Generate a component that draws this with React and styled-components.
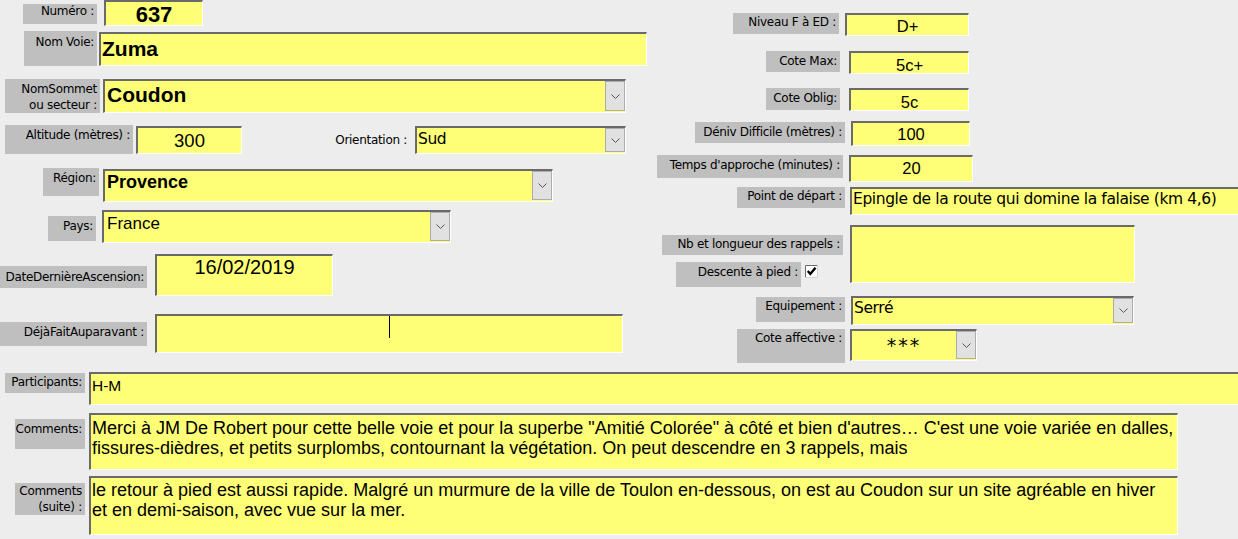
import React from 'react';
import styled, { createGlobalStyle } from 'styled-components';

const Global = createGlobalStyle`
  html, body { margin: 0; padding: 0; background: #ededed; }
  body { width: 1238px; height: 539px; overflow: hidden; }
`;

const Form = styled.div`
  width: 1238px;
  height: 539px;
  overflow: hidden;
  background: #ededed;
  display: flex;
  flex-direction: column;
`;

const TopSection = styled.div`
  display: flex;
  height: 362px;
  flex: none;
`;

const Column = styled.div`
  display: flex;
  flex-direction: column;
  width: ${p => p.$w}px;
  flex: none;
`;

const Row = styled.div`
  display: flex;
  align-items: flex-start;
  flex: none;
  margin-top: ${p => p.$mt || 0}px;
`;

const Label = styled.div`
  box-sizing: border-box;
  flex: none;
  width: ${p => p.$w}px;
  height: ${p => p.$h}px;
  margin-left: ${p => p.$x || 0}px;
  margin-top: ${p => p.$y || 0}px;
  padding: ${p => (p.$pt ?? 3)}px 3px 0 0;
  background: ${p => (p.$plain ? 'transparent' : '#bfbfbf')};
  color: #000;
  font-family: "DejaVu Sans", Verdana, sans-serif;
  font-size: 12px;
  letter-spacing: -0.3px;
  line-height: ${p => p.$lh || 15}px;
  text-align: right;
  white-space: pre-line;
`;

const Field = styled.div`
  box-sizing: border-box;
  flex: none;
  display: flex;
  align-items: flex-start;
  width: ${p => p.$w}px;
  height: ${p => p.$h}px;
  margin-left: ${p => p.$x || 0}px;
  margin-top: ${p => p.$y || 0}px;
  background: #ffff77;
  border-top: 2px solid #6a6a6a;
  border-left: 2px solid #6a6a6a;
  border-right: 1px solid #ffffff;
  border-bottom: 1px solid #ffffff;
  overflow: hidden;
`;

const Value = styled.div`
  flex: 1;
  min-width: 0;
  align-self: stretch;
  box-sizing: border-box;
  padding-top: ${p => p.$pt || 0}px;
  padding-left: ${p => p.$pl || 0}px;
  font-family: ${p => (p.$sys ? '"DejaVu Sans", Verdana, sans-serif' : '"Liberation Sans", Arial, sans-serif')};
  font-size: ${p => p.$size}px;
  font-weight: ${p => (p.$bold ? 700 : 400)};
  letter-spacing: ${p => (p.$ls != null ? `${p.$ls}px` : p.$sys ? '-0.4px' : '0')};
  line-height: ${p => (p.$lh ? `${p.$lh}px` : 'normal')};
  text-align: ${p => p.$align || 'left'};
  color: #000;
  white-space: nowrap;
`;

const DropButton = styled.div`
  box-sizing: border-box;
  flex: none;
  width: 20px;
  align-self: stretch;
  margin-bottom: 1px;
  background: #e1e1e1;
  border: 1px solid #acacac;
  display: flex;
  align-items: center;
  justify-content: center;
`;

const LabelStack = styled.div`
  display: flex;
  flex-direction: column;
  width: ${p => p.$w}px;
  flex: none;
`;

const CheckRow = styled.div`
  display: flex;
  align-items: flex-start;
  margin-left: ${p => p.$x || 0}px;
  margin-top: ${p => p.$y || 0}px;
`;

const CheckBox = styled.div`
  flex: none;
  width: 13px;
  height: 13px;
  margin-left: 4px;
  margin-top: 3px;
  display: flex;
`;

const Caret = styled.span`
  display: block;
  width: 1px;
  height: 22px;
  margin-left: ${p => p.$x}px;
  background: #000;
`;

const Chevron = () => (
  <svg width="9" height="5" viewBox="0 0 9 5">
    <polyline points="0.5,0.5 4.5,4.5 8.5,0.5" fill="none" stroke="#555" strokeWidth="1" />
  </svg>
);

const Check = () => (
  <svg width="13" height="13" viewBox="0 0 13 13">
    <rect x="0" y="0" width="13" height="13" fill="#fff" />
    <path d="M0.5 12.5 V0.5 H12.5" fill="none" stroke="#6a6a6a" />
    <path d="M12.5 0.5 V12.5 H0.5" fill="none" stroke="#d4d4d4" />
    <path d="M2.8 6 L5.3 9 L10.5 2.8" fill="none" stroke="#000" strokeWidth="2.4" />
  </svg>
);

export default function App() {
  return (
    <Form>
      <Global />
      <TopSection>
        <Column $w={650}>
          <Row $mt={0}>
            <Label $x={23} $y={4} $w={74} $h={20} $pt={0}>Numéro :</Label>
            <Field $x={7} $w={99} $h={26}>
              <Value $size={22} $bold $align="center">637</Value>
            </Field>
          </Row>
          <Row $mt={5}>
            <Label $x={24} $w={73} $h={35} $pt={4}>Nom Voie:</Label>
            <Field $x={2} $y={1} $w={548} $h={34}>
              <Value $size={21} $bold $pl={1} $pt={3}>Zuma</Value>
            </Field>
          </Row>
          <Row $mt={13}>
            <Label $x={5} $w={95} $h={34} $pt={2} $lh={16}>{'NomSommet\nou secteur :'}</Label>
            <Field $x={3} $w={523} $h={34}>
              <Value $size={21} $bold $pl={2} $pt={2}>Coudon</Value>
              <DropButton><Chevron /></DropButton>
            </Field>
          </Row>
          <Row $mt={12}>
            <Label $x={5} $w={128} $h={29}>Altitude (mètres) :</Label>
            <Field $x={3} $y={1} $w={106} $h={28}>
              <Value $size={18.5} $align="center" $pt={2}>300</Value>
            </Field>
            <Label $plain $x={85} $y={5} $w={83} $h={20}>Orientation :</Label>
            <Field $x={5} $y={1} $w={211} $h={28}>
              <Value $sys $size={15.5} $pl={1} $pt={2}>Sud</Value>
              <DropButton><Chevron /></DropButton>
            </Field>
          </Row>
          <Row $mt={14}>
            <Label $x={43} $w={56} $h={28}>Région:</Label>
            <Field $x={4} $y={1} $w={450} $h={33}>
              <Value $size={18} $bold $pl={2} $pt={1}>Provence</Value>
              <DropButton><Chevron /></DropButton>
            </Field>
          </Row>
          <Row $mt={8}>
            <Label $x={48} $y={6} $w={48} $h={25}>Pays:</Label>
            <Field $x={6} $w={349} $h={33}>
              <Value $size={17} $pl={3} $pt={2}>France</Value>
              <DropButton><Chevron /></DropButton>
            </Field>
          </Row>
          <Row $mt={11}>
            <Label $y={12} $w={147} $h={22} $pt={4}>DateDernièreAscension:</Label>
            <Field $x={8} $w={178} $h={42}>
              <Value $size={20} $align="center" $pt={0}>16/02/2019</Value>
            </Field>
          </Row>
          <Row $mt={18}>
            <Label $y={8} $w={147} $h={24} $pt={3}>DéjàFaitAuparavant :</Label>
            <Field $x={8} $w={468} $h={39}>
              <Caret $x={232} />
            </Field>
          </Row>
        </Column>

        <Column $w={588}>
          <Row $mt={13}>
            <Label $x={83} $w={106} $h={21} $pt={2}>Niveau F à ED :</Label>
            <Field $x={6} $w={124} $h={23}>
              <Value $size={16.5} $align="center" $pt={2}>D+</Value>
            </Field>
          </Row>
          <Row $mt={15}>
            <Label $x={116} $w={74} $h={21}>Cote Max:</Label>
            <Field $x={9} $w={120} $h={23}>
              <Value $size={16.5} $align="center" $pt={3}>5c+</Value>
            </Field>
          </Row>
          <Row $mt={14}>
            <Label $x={116} $w={74} $h={22}>Cote Oblig:</Label>
            <Field $x={9} $w={120} $h={23}>
              <Value $size={16.5} $align="center" $pt={3}>5c</Value>
            </Field>
          </Row>
          <Row $mt={10}>
            <Label $x={45} $y={1} $w={150} $h={21}>Déniv Difficile (mètres) :</Label>
            <Field $x={6} $w={119} $h={25}>
              <Value $size={16.5} $align="center" $pt={2}>100</Value>
            </Field>
          </Row>
          <Row $mt={9}>
            <Label $x={7} $w={186} $h={23}>Temps d'approche (minutes) :</Label>
            <Field $x={6} $w={124} $h={27}>
              <Value $size={16.5} $align="center" $pt={2}>20</Value>
            </Field>
          </Row>
          <Row $mt={5}>
            <Label $x={87} $w={108} $h={21} $pt={2}>Point de départ :</Label>
            <Field $x={5} $w={400} $h={28}>
              <Value $sys $size={15.5} $pl={1} $pt={1}>Epingle de la route qui domine la falaise (km 4,6)</Value>
            </Field>
          </Row>
          <Row $mt={10}>
            <LabelStack $w={193}>
              <Label $x={12} $y={10} $w={181} $h={20} $pt={2}>Nb et longueur des rappels :</Label>
              <CheckRow $x={26} $y={7}>
                <Label $w={125} $h={25}>Descente à pied :</Label>
                <CheckBox><Check /></CheckBox>
              </CheckRow>
            </LabelStack>
            <Field $x={7} $w={285} $h={58} />
          </Row>
          <Row $mt={9}>
            <Label $x={106} $y={1} $w={89} $h={25} $pt={2}>Equipement :</Label>
            <Field $x={6} $w={283} $h={29}>
              <Value $sys $size={15.5} $pl={1} $pt={1}>Serré</Value>
              <DropButton><Chevron /></DropButton>
            </Field>
          </Row>
          <Row $mt={3}>
            <Label $x={87} $y={1} $w={108} $h={34} $pt={2}>Cote affective :</Label>
            <Field $x={5} $y={1} $w={127} $h={32}>
              <Value $sys $size={19} $ls={2} $align="center" $pt={3}>***</Value>
              <DropButton><Chevron /></DropButton>
            </Field>
          </Row>
        </Column>
      </TopSection>

      <Row $mt={10}>
        <Label $x={5} $y={1} $w={80} $h={20} $pt={2}>Participants:</Label>
        <Field $x={4} $w={1160} $h={33}>
          <Value $size={15.5} $pl={1} $pt={3}>H-M</Value>
        </Field>
      </Row>
      <Row $mt={8}>
        <Label $x={15} $y={6} $w={70} $h={30}>Comments:</Label>
        <Field $x={4} $w={1089} $h={57}>
          <Value $size={18} $lh={20} $pl={1} $pt={3}>
            Merci à JM De Robert pour cette belle voie et pour la superbe "Amitié Colorée" à côté et bien d'autres… C'est une voie variée en dalles,
            <br />
            fissures-dièdres, et petits surplombs, contournant la végétation. On peut descendre en 3 rappels, mais
          </Value>
        </Field>
      </Row>
      <Row $mt={6}>
        <Label $x={15} $y={7} $w={70} $h={32} $pt={0} $lh={16}>{'Comments\n(suite) :'}</Label>
        <Field $x={4} $w={1089} $h={59}>
          <Value $size={18} $lh={20} $pl={1} $pt={2}>
            le retour à pied est aussi rapide. Malgré un murmure de la ville de Toulon en-dessous, on est au Coudon sur un site agréable en hiver
            <br />
            et en demi-saison, avec vue sur la mer.
          </Value>
        </Field>
      </Row>
    </Form>
  );
}
